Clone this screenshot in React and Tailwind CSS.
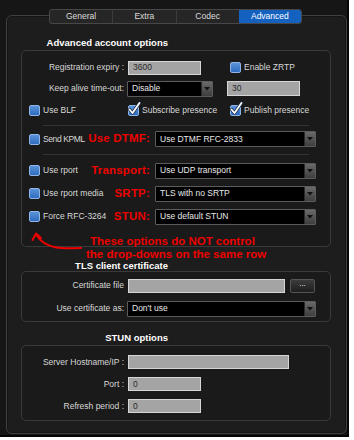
import React from "react";

const font = { fontFamily: '"Liberation Sans", Arial, sans-serif' };

function Checkbox({ checked, className = "" }) {
  return (
    <div className={"relative w-[11px] h-[11px] shrink-0 " + className}>
      <div className="w-[11px] h-[11px] rounded-[2px] border border-[#8fb6e6] bg-gradient-to-b from-[#5a93d8] to-[#2f6cc0]" />
      {checked && (
        <svg className="absolute left-[-1px] top-[-4px] overflow-visible" width="14" height="15" viewBox="0 0 14 15">
          <path d="M2.5 8.5 L5.5 12 L12.5 2" fill="none" stroke="#1b2a44" strokeWidth="3.2" strokeLinecap="round" strokeLinejoin="round" />
          <path d="M2.5 8.5 L5.5 12 L12.5 2" fill="none" stroke="#ffffff" strokeWidth="1.8" strokeLinecap="round" strokeLinejoin="round" />
        </svg>
      )}
    </div>
  );
}

function Input({ value = "", className = "" }) {
  return (
    <div className={"h-[14px] bg-[#a4a4a4] border border-[#d6d6d6] flex items-center pl-[4px] text-[8.5px] text-[#2a2a2a] shrink-0 " + className}>
      {value}
    </div>
  );
}

function Select({ value, className = "" }) {
  return (
    <div className={"h-[16px] bg-black border border-[#5c5c5c] flex items-center shrink-0 rounded-[1px] " + className}>
      <span className="flex-1 pl-[4px] text-[8.5px] text-[#e8e8e8] whitespace-nowrap">{value}</span>
      <div className="w-[11px] h-[14px] bg-gradient-to-b from-[#6a6a6a] to-[#3e3e3e] border-l border-[#2a2a2a] flex items-center justify-center">
        <svg width="6" height="4" viewBox="0 0 6 4"><path d="M0 0 L6 0 L3 3.5 Z" fill="#111" /></svg>
      </div>
    </div>
  );
}

function Lbl({ children, className = "" }) {
  return <span className={"text-[8.5px] text-[#d8d8d8] whitespace-nowrap " + className}>{children}</span>;
}

function Red({ children }) {
  return <span className="text-[11.5px] font-bold text-[#ee0000] whitespace-nowrap leading-none tracking-[0.2px]">{children}</span>;
}

function Title({ children }) {
  return (
    <div className="h-[14px] w-[147px] text-right text-[9.5px] font-bold text-white leading-[14px] whitespace-nowrap">{children}</div>
  );
}

function Box({ children, className = "" }) {
  return (
    <div className={"relative w-[310px] border border-[#3a3a3a] rounded-[5px] bg-[#1a1a1a] " + className}>{children}</div>
  );
}

function CbRow({ label, red, value }) {
  return (
    <div className="flex items-center h-[23px] pl-[7px]">
      <div className="w-[121px] flex items-center justify-between">
        <div className="flex items-center">
          <Checkbox />
          <Lbl className="ml-[3px]">{label}</Lbl>
        </div>
        <Red>{red}</Red>
      </div>
      <Select value={value} className="ml-[5px] w-[161px]" />
    </div>
  );
}

export default function App() {
  const tabs = ["General", "Extra", "Codec", "Advanced"];
  return (
    <div style={font} className="w-[354px] h-[440px] bg-white overflow-hidden">
      <div className="w-[349px] h-[437px] bg-[#161616] border-r-2 border-b-2 border-[#050505] pt-[9px]">
        <div className="relative z-10 ml-[49px] w-[253px] h-[15px] flex rounded-[3px] border border-[#474747] bg-[#262626] overflow-hidden">
          {tabs.map((t, i) => (
            <div
              key={t}
              className={
                "flex-1 flex items-center justify-center text-[8.5px] " +
                (t === "Advanced"
                  ? "bg-[#1461c0] text-white"
                  : "text-[#dcdcdc] " + (i > 0 ? "border-l border-[#3c3c3c]" : ""))
              }
            >
              {t}
            </div>
          ))}
        </div>
        <div className="-mt-[9px] ml-[6px] w-[341px] h-[419px] border border-[#3f3f3f] rounded-[6px] bg-[#1d1d1d] pl-[14px] pt-[20px] shadow-[inset_0_0_0_1px_#151515]">
          <Title>Advanced account options</Title>
          <Box className="h-[197px] pt-[6px]">
            <div className="flex items-center h-[21px]">
              <Lbl className="w-[102px] text-right">Registration expiry :</Lbl>
              <Input value="3600" className="ml-[4px] w-[73px]" />
              <Checkbox className="ml-[29px]" />
              <Lbl className="ml-[3px]">Enable ZRTP</Lbl>
            </div>
            <div className="flex items-center h-[21px]">
              <Lbl className="w-[102px] text-right">Keep alive time-out:</Lbl>
              <Select value="Disable" className="ml-[3px] w-[86px]" />
              <Input value="30" className="ml-[14px] w-[73px] h-[15px]" />
            </div>
            <div className="flex items-center h-[22px] pl-[7px]">
              <div className="w-[99px] flex items-center">
                <Checkbox />
                <Lbl className="ml-[3px]">Use BLF</Lbl>
              </div>
              <div className="w-[102px] flex items-center">
                <Checkbox checked />
                <Lbl className="ml-[3px]">Subscribe presence</Lbl>
              </div>
              <div className="flex items-center">
                <Checkbox checked />
                <Lbl className="ml-[3px]">Publish presence</Lbl>
              </div>
            </div>
            <div className="h-[8px] flex items-center">
              <div className="ml-[21px] w-[266px] border-t border-[#333333]" />
            </div>
            <div className="flex items-center h-[20px] pl-[7px]">
              <div className="w-[121px] flex items-center justify-between">
                <div className="flex items-center">
                  <Checkbox />
                  <Lbl className="ml-[3px] tracking-[-0.4px]">Send KPML</Lbl>
                </div>
                <Red>Use DTMF:</Red>
              </div>
              <Select value="Use DTMF RFC-2833" className="ml-[5px] w-[161px]" />
            </div>
            <div className="h-[10px] flex items-center">
              <div className="ml-[21px] w-[266px] border-t border-[#333333]" />
            </div>
            <CbRow label="Use rport" red="Transport:" value="Use UDP transport" />
            <CbRow label="Use rport media" red="SRTP:" value="TLS with no SRTP" />
            <CbRow label="Force RFC-3264" red="STUN:" value="Use default STUN" />

            <svg className="absolute left-0 top-0 overflow-visible" width="80" height="210" viewBox="0 0 80 210">
              <path d="M59 197 C 40 198, 24 198, 15 185" fill="none" stroke="#ee0000" strokeWidth="2" strokeLinecap="round" />
              <path d="M10.5 189 L14 182.5 L19 187" fill="none" stroke="#ee0000" strokeWidth="2" strokeLinecap="round" strokeLinejoin="round" />
            </svg>
            <div className="absolute left-[68px] top-[185px] text-[11.5px] font-bold text-[#ee0000] leading-[11px] whitespace-nowrap">
              These options do NOT control
            </div>
            <div className="absolute left-[64px] top-[198px] text-[11.5px] font-bold text-[#ee0000] leading-[11px] whitespace-nowrap">
              the drop-downs on the same row
            </div>
          </Box>

          <div className="mt-[10px] pt-[3px]">
            <div className="h-[11px] w-[147px] text-right text-[9.5px] font-bold text-white leading-[11px] whitespace-nowrap">TLS client certificate</div>
          </div>
          <Box className="h-[51px] pt-[2px]">
            <div className="flex items-center h-[23px]">
              <Lbl className="w-[102px] text-right">Certificate file</Lbl>
              <Input className="ml-[4px] w-[157px]" />
              <div className="ml-[5px] w-[25px] h-[14px] rounded-[2px] border border-[#555] bg-gradient-to-b from-[#3c3c3c] to-[#1e1e1e] flex items-center justify-center text-[8px] text-white leading-none pb-[3px]">
                ...
              </div>
            </div>
            <div className="flex items-center h-[23px]">
              <Lbl className="w-[102px] text-right">Use certificate as:</Lbl>
              <Select value="Don't use" className="ml-[3px] w-[189px]" />
            </div>
          </Box>

          <div className="mt-[9px]">
            <Title>STUN options</Title>
          </div>
          <Box className="h-[76px] pt-[5px]">
            <div className="flex items-center h-[22px]">
              <Lbl className="w-[102px] text-right">Server Hostname/IP :</Lbl>
              <Input className="ml-[4px] w-[161px]" />
            </div>
            <div className="flex items-center h-[22px]">
              <Lbl className="w-[102px] text-right">Port :</Lbl>
              <Input value="0" className="ml-[4px] w-[73px]" />
            </div>
            <div className="flex items-center h-[22px]">
              <Lbl className="w-[102px] text-right">Refresh period :</Lbl>
              <Input value="0" className="ml-[4px] w-[73px]" />
            </div>
          </Box>
        </div>
      </div>
    </div>
  );
}
